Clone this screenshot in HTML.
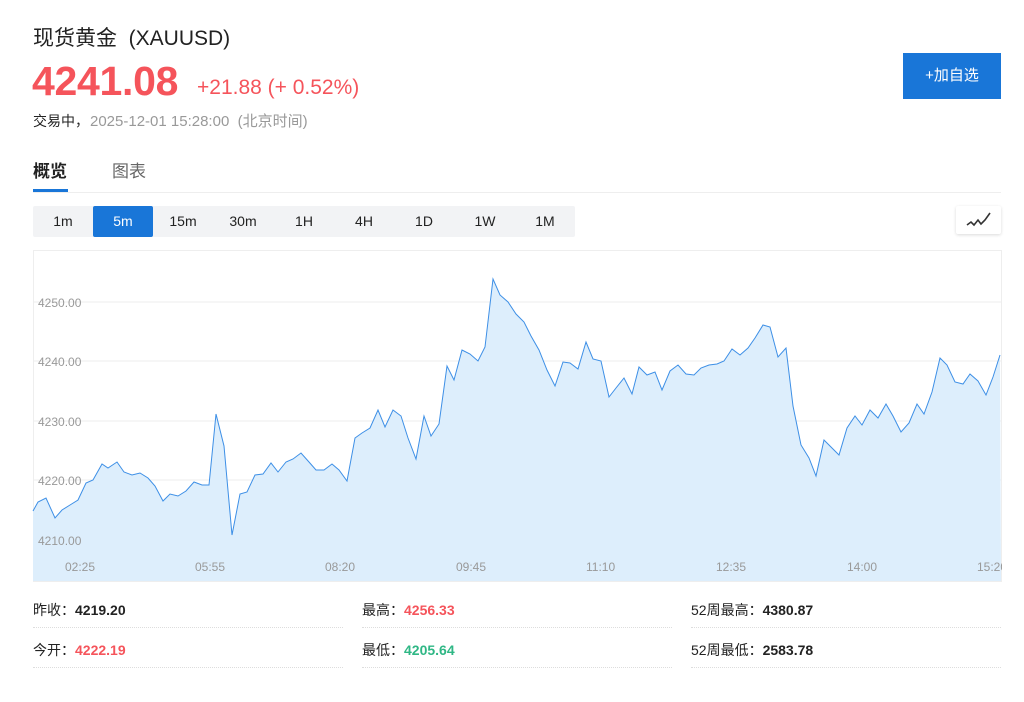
<!DOCTYPE html>
<html><head><meta charset="utf-8"><style>
body{margin:0;background:#fff;font-family:"Liberation Sans","Noto Sans CJK SC",sans-serif;width:1024px;height:702px;overflow:hidden;position:relative}
.a{position:absolute;white-space:nowrap}
.tabs{position:absolute;left:33px;top:206px;width:542px;height:31px;background:#f2f3f5;border-radius:2px}
.tabs span{position:absolute;top:0;width:60px;height:31px;line-height:31px;text-align:center;font-size:14px;color:#222}
.row{position:absolute;height:0;border-bottom:1px dotted #ddd;width:310px}
.st{position:absolute;font-size:14px;color:#222}
.st b{font-weight:bold}
</style></head><body>
<div class="a" style="left:33px;top:22px;font-size:21px;color:#222">现货黄金&nbsp; (XAUUSD)</div>
<div class="a" style="left:32px;top:58px;font-size:41px;font-weight:bold;color:#f5545b;letter-spacing:-0.3px">4241.08</div>
<div class="a" style="left:197px;top:76px;font-size:21px;color:#f5545b">+21.88 (+ 0.52%)</div>
<div class="a" style="left:33px;top:110px;font-size:14px;color:#222">交易中，<span style="color:#999;font-size:15px;margin-left:1px">2025-12-01 15:28:00&nbsp; (北京时间)</span></div>
<div class="a" style="left:903px;top:53px;width:98px;height:46px;background:#1976d8;color:#fff;font-size:15px;line-height:46px;text-align:center">+加自选</div>
<div class="a" style="left:33px;top:157px;font-size:17px;font-weight:bold;color:#222">概览</div>
<div class="a" style="left:33px;top:189px;width:35px;height:3px;background:#1976d8"></div>
<div class="a" style="left:112px;top:157px;font-size:17px;color:#666">图表</div>
<div class="a" style="left:33px;top:192px;width:968px;height:1px;background:#eee"></div>
<div class="tabs">
<span style="left:0">1m</span><span style="left:60px;background:#1976d8;color:#fff;border-radius:2px">5m</span><span style="left:120px">15m</span><span style="left:180px">30m</span><span style="left:241px">1H</span><span style="left:301px">4H</span><span style="left:361px">1D</span><span style="left:422px">1W</span><span style="left:482px">1M</span>
</div>
<div class="a" style="left:956px;top:206px;width:45px;height:28px;background:#fff;box-shadow:0 1px 3px rgba(0,0,0,.15);border-radius:2px">
<svg width="45" height="28"><path d="M11 19 L15 16 L18 19 L22 14 L25 18 L29 14 L34 7" fill="none" stroke="#333" stroke-width="1.6"/></svg></div>
<svg class="a" style="left:0;top:0" width="1024" height="702">
<rect x="33.5" y="250.5" width="968" height="331" fill="none" stroke="#eee"/>
<g stroke="#eee"><line x1="34" y1="302" x2="1001" y2="302"/><line x1="34" y1="361" x2="1001" y2="361"/><line x1="34" y1="421" x2="1001" y2="421"/><line x1="34" y1="480" x2="1001" y2="480"/><line x1="34" y1="540" x2="1001" y2="540"/></g>
<path fill="#ddeefc" stroke="none" d="M33,511 L38,502 46,498 55,518 62,510 70,505 78,500 86,483 93,480 102,464 108,468 117,462 124,472 132,475 140,473 148,478 155,486 163,501 170,494 178,496 186,491 194,482 202,485 209,485 216,414 224,446 232,535 240,494 247,492 255,475 263,474 271,463 278,472 286,462 293,459 301,453 309,462 316,470 324,470 332,464 339,470 347,481 355,438 362,433 370,428 378,410 385,427 393,410 401,416 408,438 416,459 424,416 431,436 439,424 447,366 454,380 462,350 470,354 478,361 485,347 493,279 500,295 508,302 516,314 524,322 531,336 539,350 547,370 555,386 563,362 570,363 578,369 586,342 593,359 601,361 609,397 616,388 624,378 632,394 639,367 647,375 655,372 662,390 670,371 678,365 686,374 694,375 701,368 709,365 717,364 724,361 732,349 740,355 748,348 755,338 763,325 770,327 778,357 786,348 793,406 801,445 809,458 816,476 824,440 832,448 839,455 847,428 855,416 862,425 870,410 878,418 886,404 893,416 901,432 909,423 917,404 924,414 932,392 940,358 947,365 955,382 963,384 970,374 978,381 986,395 993,377 1000,355 L1001,581 L33,581 Z"/>
<path fill="none" stroke="#3d8fe6" stroke-width="1" d="M33,511 L38,502 46,498 55,518 62,510 70,505 78,500 86,483 93,480 102,464 108,468 117,462 124,472 132,475 140,473 148,478 155,486 163,501 170,494 178,496 186,491 194,482 202,485 209,485 216,414 224,446 232,535 240,494 247,492 255,475 263,474 271,463 278,472 286,462 293,459 301,453 309,462 316,470 324,470 332,464 339,470 347,481 355,438 362,433 370,428 378,410 385,427 393,410 401,416 408,438 416,459 424,416 431,436 439,424 447,366 454,380 462,350 470,354 478,361 485,347 493,279 500,295 508,302 516,314 524,322 531,336 539,350 547,370 555,386 563,362 570,363 578,369 586,342 593,359 601,361 609,397 616,388 624,378 632,394 639,367 647,375 655,372 662,390 670,371 678,365 686,374 694,375 701,368 709,365 717,364 724,361 732,349 740,355 748,348 755,338 763,325 770,327 778,357 786,348 793,406 801,445 809,458 816,476 824,440 832,448 839,455 847,428 855,416 862,425 870,410 878,418 886,404 893,416 901,432 909,423 917,404 924,414 932,392 940,358 947,365 955,382 963,384 970,374 978,381 986,395 993,377 1000,355"/>
<g font-family="Liberation Sans" font-size="12" fill="#999">
<text x="38" y="307">4250.00</text><text x="38" y="366">4240.00</text><text x="38" y="426">4230.00</text><text x="38" y="485">4220.00</text><text x="38" y="545">4210.00</text>
<text x="65" y="571">02:25</text><text x="195" y="571">05:55</text><text x="325" y="571">08:20</text><text x="456" y="571">09:45</text><text x="586" y="571">11:10</text><text x="716" y="571">12:35</text><text x="847" y="571">14:00</text><text x="977" y="571">15:20</text>
</g></svg>
<div class="a" style="left:1002px;top:560px;width:22px;height:30px;background:#fff"></div>
<div class="st" style="left:33px;top:600px">昨收：<b>4219.20</b></div>
<div class="st" style="left:362px;top:600px">最高：<b style="color:#f5545b">4256.33</b></div>
<div class="st" style="left:691px;top:600px">52周最高：<b>4380.87</b></div>
<div class="st" style="left:33px;top:640px">今开：<b style="color:#f5545b">4222.19</b></div>
<div class="st" style="left:362px;top:640px">最低：<b style="color:#2fb785">4205.64</b></div>
<div class="st" style="left:691px;top:640px">52周最低：<b>2583.78</b></div>
<div class="row" style="left:33px;top:627px"></div><div class="row" style="left:362px;top:627px"></div><div class="row" style="left:691px;top:627px"></div>
<div class="row" style="left:33px;top:667px"></div><div class="row" style="left:362px;top:667px"></div><div class="row" style="left:691px;top:667px"></div>
</body></html>
